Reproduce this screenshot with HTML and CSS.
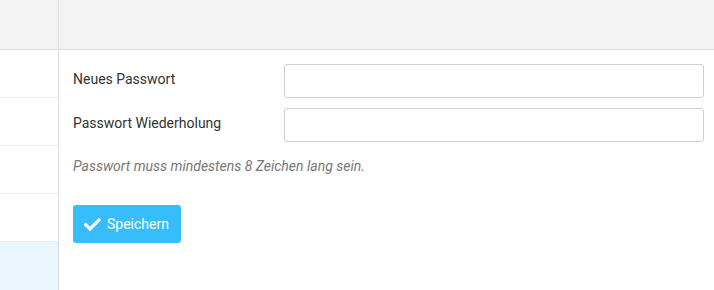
FILE: index.html
```html
<!DOCTYPE html>
<html lang="de">
<head>
    <meta charset="UTF-8">
    <title>Passwort ändern</title>
    <link rel="stylesheet" href="styles.css">
</head>
<body>
    <div class="layout">
        <aside class="sidebar">
            <div class="sidebar-head"></div>
            <div class="sidebar-row"></div>
            <div class="sidebar-row"></div>
            <div class="sidebar-row"></div>
            <div class="sidebar-row"></div>
            <div class="sidebar-row active"></div>
        </aside>
        <main class="content">
            <div class="content-head"></div>
            <form class="pw-form">
                <div class="form-row">
                    <label for="pw1">Neues Passwort</label>
                    <input type="password" id="pw1">
                </div>
                <div class="form-row">
                    <label for="pw2">Passwort Wiederholung</label>
                    <input type="password" id="pw2">
                </div>
                <p class="hint">Passwort muss mindestens 8 Zeichen lang sein.</p>
                <button type="button" class="btn-save">
                    <svg width="17" height="13" viewBox="0 0 17 13"><path d="M1.8 6.8 L6 11 L15 2" fill="none" stroke="#fff" stroke-width="3.2" stroke-linecap="square"/></svg>
                    Speichern
                </button>
            </form>
        </main>
    </div>
</body>
</html>
```

FILE: styles.css
```css
body {
    margin: 0;
    font-family: Roboto, 'Liberation Sans', sans-serif;
    font-size: 14px;
    color: #333;
    background: #fff;
}

.layout {
    display: flex;
    height: 290px;
    overflow: hidden;
}

.sidebar {
    width: 58px;
    border-right: 1px solid #dcdfe2;
    flex-shrink: 0;
}

.sidebar-head {
    height: 49px;
    background: #f3f3f3;
    border-bottom: 1px solid #dcdfe2;
}

.sidebar-row {
    height: 47px;
    border-bottom: 1px solid #eceeef;
}

.sidebar-row.active {
    background: #eaf6fd;
    border-bottom: none;
    height: 60px;
}

.content {
    flex: 1;
}

.content-head {
    height: 49px;
    background: #f3f3f3;
    border-bottom: 1px solid #dcdfe2;
}

.pw-form {
    padding: 14px 10px 0 14px;
}

.form-row {
    display: flex;
    align-items: flex-start;
    margin-bottom: 10px;
}

.form-row label {
    width: 211px;
    padding-top: 7px;
    color: #333;
}

.form-row input {
    flex: 1;
    height: 34px;
    box-sizing: border-box;
    border: 1px solid #ccd0d5;
    border-radius: 3px;
    padding: 6px 10px;
}

.hint {
    margin: 16px 0 31px;
    font-style: italic;
    color: #777;
}

.btn-save {
    display: flex;
    align-items: center;
    gap: 6px;
    height: 38px;
    width: 108px;
    padding: 0 10px 0 11px;
    border: none;
    border-radius: 3px;
    background: #37bdfc;
    color: #fff;
    font-family: Roboto, 'Liberation Sans', sans-serif;
    font-size: 14px;
}
```
